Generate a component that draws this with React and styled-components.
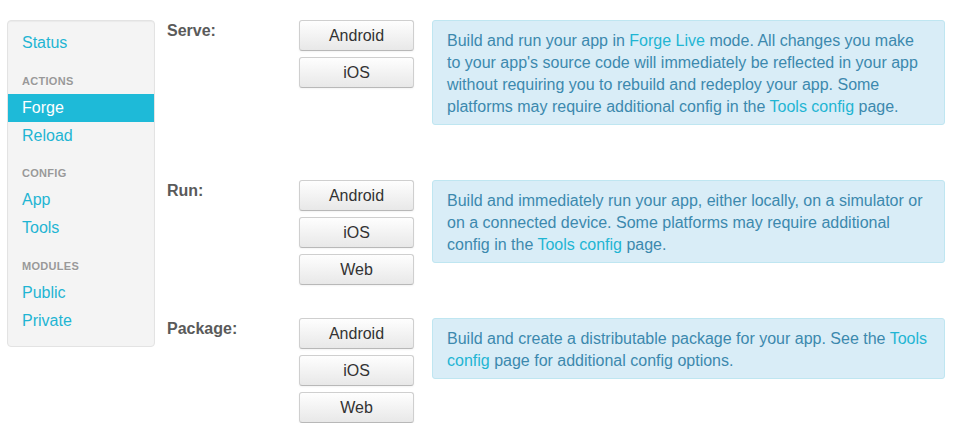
import React from "react";
import styled, { createGlobalStyle } from "styled-components";

const GlobalStyle = createGlobalStyle`
  body {
    margin: 0;
    background: #fff;
    font-family: "Liberation Sans", Arial, sans-serif;
    font-size: 16px;
    color: #333;
  }
`;

const Page = styled.div`
  display: flex;
  align-items: flex-start;
  padding: 20px 0 0 7px;
`;

const Sidebar = styled.ul`
  width: 146px;
  margin: 0;
  padding: 8px 0 11px;
  list-style: none;
  background: #f4f4f4;
  border: 1px solid #e3e3e3;
  border-radius: 4px;
  box-shadow: inset 0 1px 1px rgba(0, 0, 0, 0.04);
`;

const NavHeader = styled.li`
  margin-top: ${(p) => (p.$first ? 11 : 10)}px;
  padding: 3px 14px;
  line-height: 20px;
  font-size: 11px;
  font-weight: bold;
  letter-spacing: 0.3px;
  text-transform: uppercase;
  color: #999;
  text-shadow: 0 1px 0 rgba(255, 255, 255, 0.5);
`;

const NavItem = styled.li`
  a {
    display: block;
    padding: 0 14px;
    line-height: 28px;
    font-size: 16px;
    text-decoration: none;
    color: ${(p) => (p.$active ? "#fff" : "#1fb5d3")};
    background: ${(p) => (p.$active ? "#1ebad8" : "transparent")};
  }
`;

const Main = styled.div`
  margin-left: 12px;
  width: 778px;
`;

const Section = styled.div`
  display: flex;
  align-items: flex-start;
  margin-bottom: ${(p) => p.$gap}px;
`;

const Label = styled.div`
  width: 132px;
  flex: none;
  font-size: 16px;
  line-height: 22px;
  font-weight: bold;
  color: #5a5a5a;
`;

const Buttons = styled.div`
  display: flex;
  flex-direction: column;
  gap: 6px;
  width: 115px;
  flex: none;
`;

const Button = styled.button`
  height: 31px;
  padding: 0;
  font-family: inherit;
  font-size: 16px;
  color: #333;
  background: linear-gradient(#fefefe, #e8e8e8);
  border: 1px solid #cfcfcf;
  border-bottom-color: #b8b8b8;
  border-radius: 3px;
  box-shadow: inset 0 1px 0 rgba(255, 255, 255, 0.3), 0 1px 2px rgba(0, 0, 0, 0.05);
  cursor: pointer;
`;

const Info = styled.div`
  margin-left: 18px;
  width: 485px;
  padding: 9px 14px 6px;
  font-size: 16px;
  line-height: 22px;
  color: #3c89ae;
  background: #d9edf7;
  border: 1px solid #bfe6f1;
  border-radius: 3px;

  a {
    color: #1fb5d3;
    text-decoration: none;
  }
`;

const nav = [
  { type: "item", label: "Status" },
  { type: "header", label: "Actions", first: true },
  { type: "item", label: "Forge", active: true },
  { type: "item", label: "Reload" },
  { type: "header", label: "Config" },
  { type: "item", label: "App" },
  { type: "item", label: "Tools" },
  { type: "header", label: "Modules", first: true },
  { type: "item", label: "Public" },
  { type: "item", label: "Private" },
];

const App = () => {
  return (
    <>
      <GlobalStyle />
      <Page>
        <Sidebar>
          {nav.map((n) =>
            n.type === "header" ? (
              <NavHeader key={n.label} $first={n.first}>
                {n.label}
              </NavHeader>
            ) : (
              <NavItem key={n.label} $active={n.active}>
                <a href="#">{n.label}</a>
              </NavItem>
            )
          )}
        </Sidebar>
        <Main>
          <Section $gap={55}>
            <Label>Serve:</Label>
            <Buttons>
              <Button>Android</Button>
              <Button>iOS</Button>
            </Buttons>
            <Info>
              Build and run your app in <a href="#">Forge Live</a> mode. All changes you make
              to your app's source code will immediately be reflected in your app without
              requiring you to rebuild and redeploy your app. Some platforms may require
              additional config in the <a href="#">Tools config</a> page.
            </Info>
          </Section>
          <Section $gap={33}>
            <Label>Run:</Label>
            <Buttons>
              <Button>Android</Button>
              <Button>iOS</Button>
              <Button>Web</Button>
            </Buttons>
            <Info>
              Build and immediately run your app, either locally, on a simulator or on a
              connected device. Some platforms may require additional config in the{" "}
              <a href="#">Tools config</a> page.
            </Info>
          </Section>
          <Section $gap={0}>
            <Label>Package:</Label>
            <Buttons>
              <Button>Android</Button>
              <Button>iOS</Button>
              <Button>Web</Button>
            </Buttons>
            <Info>
              Build and create a distributable package for your app. See the{" "}
              <a href="#">Tools config</a> page for additional config options.
            </Info>
          </Section>
        </Main>
      </Page>
    </>
  );
};

export default App;
